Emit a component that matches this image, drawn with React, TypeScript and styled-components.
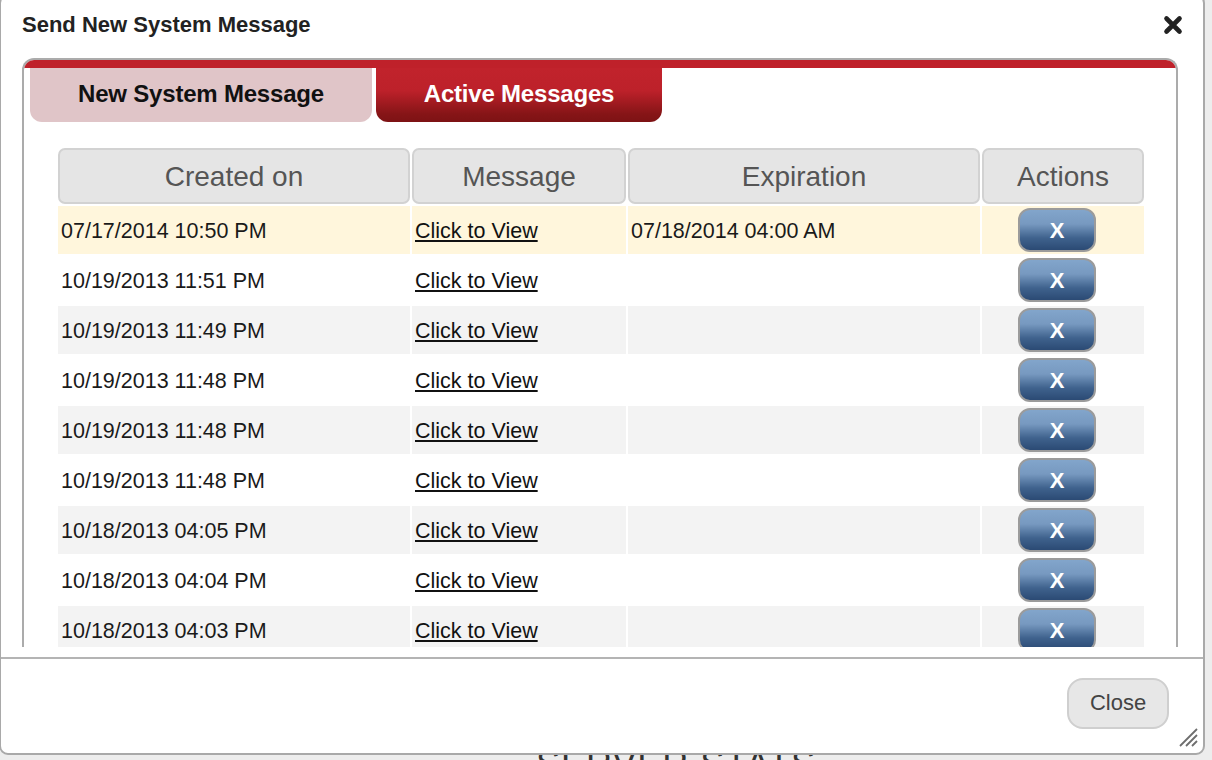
import React from "react";
import styled, { createGlobalStyle } from "styled-components";

const GlobalStyle = createGlobalStyle`
  html, body {
    margin: 0;
    padding: 0;
    background: #ededed;
    overflow: hidden;
    font-family: "Liberation Sans", Helvetica, Arial, sans-serif;
  }
`;

const Page = styled.div`
  width: 1212px;
  height: 760px;
  box-sizing: border-box;
  padding: 744px 0 0 140px;
  text-align: center;
`;

const PageHeading = styled.div`
  font-size: 36px;
  line-height: 40px;
  color: #333;
  letter-spacing: 1px;
  text-transform: uppercase;
`;

const Dialog = styled.div`
  position: fixed;
  left: -1px;
  top: -6px;
  width: 1206px;
  height: 761px;
  box-sizing: border-box;
  border: 2px solid #a9a9a9;
  border-radius: 9px;
  background: #fff;
  display: flex;
  flex-direction: column;
`;

const TitleBar = styled.div`
  height: 56px;
  flex: 0 0 56px;
  display: flex;
  align-items: center;
  justify-content: space-between;
  padding: 2px 20px 0 21px;
  box-sizing: border-box;
`;

const Title = styled.h2`
  margin: 0;
  font-size: 22px;
  font-weight: bold;
  color: #222;
`;

const CloseIcon = styled.svg`
  width: 20px;
  height: 20px;
  display: block;
`;

const Body = styled.div`
  flex: 0 0 595px;
  height: 595px;
  overflow: hidden;
  padding: 6px 25px 0 21px;
  box-sizing: border-box;
`;

const Panel = styled.div`
  border: 2px solid #ababab;
  border-bottom: none;
  border-radius: 12px 12px 0 0;
  overflow: hidden;
  min-height: 700px;
`;

const TabStrip = styled.div`
  border-top: 8px solid #bf212a;
  display: flex;
  gap: 4px;
  padding: 0 6px;
`;

const Tab = styled.div<{ $active?: boolean }>`
  height: 54px;
  width: ${(p) => (p.$active ? "286px" : "342px")};
  box-sizing: border-box;
  padding-bottom: 2px;
  border-radius: 0 0 12px 12px;
  display: flex;
  align-items: center;
  justify-content: center;
  font-size: 24px;
  font-weight: bold;
  letter-spacing: -0.2px;
  color: ${(p) => (p.$active ? "#fff" : "#111")};
  background: ${(p) =>
    p.$active
      ? "linear-gradient(#c1232c 0%, #bd212a 42%, #a01a20 65%, #861517 85%, #7d1214 100%)"
      : "#e0c5c8"};
`;

const TableWrap = styled.div`
  padding: 26px 32px 0 34px;
`;

const Grid = styled.div`
  display: grid;
  grid-template-columns: 352px 214px 352px 162px;
  gap: 2px;
`;

const HeadCell = styled.div`
  height: 56px;
  box-sizing: border-box;
  border: 2px solid #d2d2d2;
  border-radius: 7px;
  background: #e5e5e5;
  color: #555;
  font-size: 28px;
  padding-top: 2px;
  display: flex;
  align-items: center;
  justify-content: center;
`;

const Cell = styled.div<{ $bg: string }>`
  height: 48px;
  box-sizing: border-box;
  background: ${(p) => p.$bg};
  display: flex;
  align-items: center;
  padding: 2px 0 0 3px;
  font-size: 21.5px;
  color: #1a1a1a;
`;

const ActionCell = styled(Cell)`
  padding: 0 0 0 36px;
`;

const ViewLink = styled.a`
  color: #111;
  text-decoration: underline;
  text-underline-offset: 2px;
  cursor: pointer;
`;

const DeleteButton = styled.button`
  width: 78px;
  height: 44px;
  box-sizing: border-box;
  border: 2px solid #9b9b9b;
  border-radius: 12px;
  background: linear-gradient(#82a5cb 0%, #7799c0 35%, #3f628d 70%, #2b4a74 100%);
  color: #fff;
  font-family: "Liberation Sans", Helvetica, Arial, sans-serif;
  font-weight: bold;
  font-size: 22px;
  padding: 2px 0 0;
  display: flex;
  align-items: center;
  justify-content: center;
  cursor: pointer;
`;

const Footer = styled.div`
  flex: 0 0 96px;
  height: 96px;
  margin-top: 10px;
  box-sizing: border-box;
  border-top: 2px solid #b4b4b4;
  display: flex;
  justify-content: flex-end;
  align-items: flex-start;
  padding: 19px 34px 0 0;
`;

const CloseButton = styled.button`
  width: 102px;
  height: 51px;
  box-sizing: border-box;
  border: 2px solid #cfcfcf;
  border-radius: 16px;
  background: #e7e7e7;
  color: #444;
  font-family: "Liberation Sans", Helvetica, Arial, sans-serif;
  font-size: 22px;
  padding: 0 0 2px;
  cursor: pointer;
`;

const Grip = styled.svg`
  position: absolute;
  right: 4px;
  bottom: 5px;
  width: 24px;
  height: 24px;
`;

const rows = [
  ["07/17/2014 10:50 PM", "07/18/2014 04:00 AM"],
  ["10/19/2013 11:51 PM", ""],
  ["10/19/2013 11:49 PM", ""],
  ["10/19/2013 11:48 PM", ""],
  ["10/19/2013 11:48 PM", ""],
  ["10/19/2013 11:48 PM", ""],
  ["10/18/2013 04:05 PM", ""],
  ["10/18/2013 04:04 PM", ""],
  ["10/18/2013 04:03 PM", ""],
];

const rowBg = (i: number) => (i === 0 ? "#fff6dc" : i % 2 === 0 ? "#f3f3f3" : "#ffffff");

export default function App() {
  return (
    <>
      <GlobalStyle />
      <Page>
        <PageHeading>Server Stats</PageHeading>
      </Page>
      <Dialog>
        <TitleBar>
          <Title>Send New System Message</Title>
          <CloseIcon viewBox="0 0 20 20">
            <path d="M3.5 3.5 L16.5 16.5 M16.5 3.5 L3.5 16.5" stroke="#222" strokeWidth="4.6" strokeLinecap="round" />
          </CloseIcon>
        </TitleBar>
        <Body>
          <Panel>
            <TabStrip>
              <Tab>New System Message</Tab>
              <Tab $active>Active Messages</Tab>
            </TabStrip>
            <TableWrap>
              <Grid>
                <HeadCell>Created on</HeadCell>
                <HeadCell>Message</HeadCell>
                <HeadCell>Expiration</HeadCell>
                <HeadCell>Actions</HeadCell>
                {rows.map((r, i) => (
                  <React.Fragment key={i}>
                    <Cell $bg={rowBg(i)}>{r[0]}</Cell>
                    <Cell $bg={rowBg(i)}>
                      <ViewLink>Click to View</ViewLink>
                    </Cell>
                    <Cell $bg={rowBg(i)}>{r[1]}</Cell>
                    <ActionCell $bg={rowBg(i)}>
                      <DeleteButton>X</DeleteButton>
                    </ActionCell>
                  </React.Fragment>
                ))}
              </Grid>
            </TableWrap>
          </Panel>
        </Body>
        <Footer>
          <CloseButton>Close</CloseButton>
        </Footer>
        <Grip viewBox="0 0 24 24">
          <path d="M22 5 L5 22 M22 11 L11 22 M22 17 L17 22" stroke="#6e6e6e" strokeWidth="1.8" />
        </Grip>
      </Dialog>
    </>
  );
}
